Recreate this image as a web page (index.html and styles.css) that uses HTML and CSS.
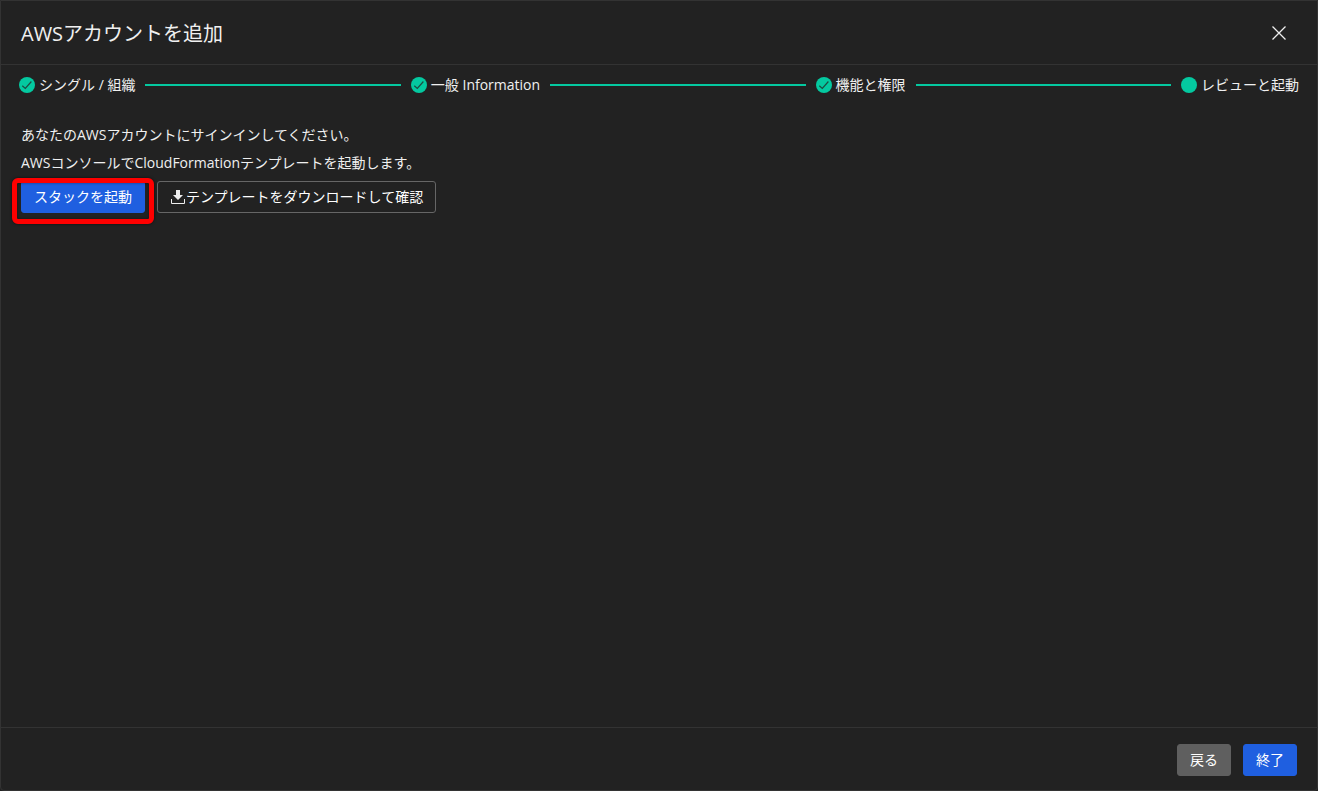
FILE: index.html
```html
<!DOCTYPE html>
<html lang="ja">
<head>
<meta charset="utf-8">
<title>AWSアカウントを追加</title>
<link rel="stylesheet" href="styles.css">
</head>
<body>
<main class="dialog">
  <header class="dialog-header">
    <h1 class="title">AWSアカウントを追加</h1>
    <button class="close" type="button" aria-label="閉じる">
      <svg width="14" height="14" viewBox="0 0 14 14"><path d="M.5 .5 13.5 13.5M13.5 .5 .5 13.5" fill="none" stroke="#eee" stroke-width="1.3"/></svg>
    </button>
  </header>
  <ol class="steps">
    <li class="step"><svg class="dot" viewBox="0 0 16 16"><circle cx="8" cy="8" r="8" fill="#04c9a0"/><path d="M3.3 8.7 6.3 11.4 12.4 4.5" fill="none" stroke="#1d4b40" stroke-width="1.2"/></svg><span>シングル / 組織</span></li>
    <li class="line" aria-hidden="true"></li>
    <li class="step"><svg class="dot" viewBox="0 0 16 16"><circle cx="8" cy="8" r="8" fill="#04c9a0"/><path d="M3.3 8.7 6.3 11.4 12.4 4.5" fill="none" stroke="#1d4b40" stroke-width="1.2"/></svg><span>一般 Information</span></li>
    <li class="line" aria-hidden="true"></li>
    <li class="step"><svg class="dot" viewBox="0 0 16 16"><circle cx="8" cy="8" r="8" fill="#04c9a0"/><path d="M3.3 8.7 6.3 11.4 12.4 4.5" fill="none" stroke="#1d4b40" stroke-width="1.2"/></svg><span>機能と権限</span></li>
    <li class="line" aria-hidden="true"></li>
    <li class="step"><svg class="dot" viewBox="0 0 16 16"><circle cx="8" cy="8" r="8" fill="#04c9a0"/></svg><span>レビューと起動</span></li>
  </ol>
  <section class="content">
    <p class="text">あなたのAWSアカウントにサインインしてください。</p>
    <p class="text">AWSコンソールでCloudFormationテンプレートを起動します。</p>
    <div class="actions">
      <div class="marked">
        <button class="btn primary" type="button">スタックを起動</button>
      </div>
      <button class="btn outline" type="button">
        <svg width="16" height="14" viewBox="0 0 16 14"><path d="M6 0h4v5h3L8 10 3 5h3z" fill="#eee"/><path d="M1.5 9v4.5h13V9" fill="none" stroke="#eee"/></svg>テンプレートをダウンロードして確認</button>
    </div>
  </section>
  <footer class="dialog-footer">
    <button class="btn secondary" type="button">戻る</button>
    <button class="btn primary" type="button">終了</button>
  </footer>
</main>
</body>
</html>
```
FILE: styles.css
```css
* { box-sizing: border-box; }

body {
  margin: 0;
  background: #222;
  color: #f0f0f0;
  font: 14px/20px "Open Sans", "Noto Sans CJK JP", sans-serif;
}

.dialog {
  display: flex;
  flex-direction: column;
  min-height: 100vh;
  border: 1px solid #333;
  border-radius: 0 0 4px 4px;
}

.dialog-header {
  display: flex;
  align-items: center;
  justify-content: space-between;
  height: 64px;
  padding: 0 20px;
  border-bottom: 1px solid #333;
}

.title {
  margin: 0;
  padding-top: 2px;
  font-size: 20px;
  line-height: 28px;
  font-weight: 400;
}

.close {
  display: flex;
  align-items: center;
  justify-content: center;
  width: 36px;
  height: 36px;
  padding: 0;
  border: 0;
  background: none;
}

.steps {
  display: flex;
  align-items: center;
  gap: 10px;
  margin: 0;
  padding: 10px 18px;
  list-style: none;
}

.step {
  display: flex;
  align-items: center;
  gap: 4px;
  white-space: nowrap;
}

.dot {
  width: 16px;
  height: 16px;
}

.line {
  flex: 1;
  height: 2px;
  background: #04c9a0;
}

.content {
  flex: 1;
  padding: 20px;
}

.text {
  margin: 0 0 8px;
}

.actions {
  display: flex;
  gap: 12px;
}

.marked {
  position: relative;
}

.marked::after {
  content: "";
  position: absolute;
  inset: -3px -9px -11px;
  border: 5px solid #f00;
  border-radius: 6px;
  box-shadow: 0 0 3px #0009, inset 0 0 3px #0006;
  pointer-events: none;
}

.btn {
  display: flex;
  align-items: center;
  justify-content: center;
  height: 32px;
  padding: 0 12px;
  border: 1px solid transparent;
  border-radius: 3px;
  color: #fff;
  font: inherit;
  white-space: nowrap;
}

.primary {
  background: #1f5fe0;
  border-color: #1f5fe0;
}

.secondary {
  background: #5f5f5f;
  border-color: #5f5f5f;
}

.outline {
  background: transparent;
  border-color: #666;
}

.dialog-footer {
  display: flex;
  justify-content: flex-end;
  gap: 12px;
  padding: 16px 20px 14px;
  border-top: 1px solid #333;
}
```
